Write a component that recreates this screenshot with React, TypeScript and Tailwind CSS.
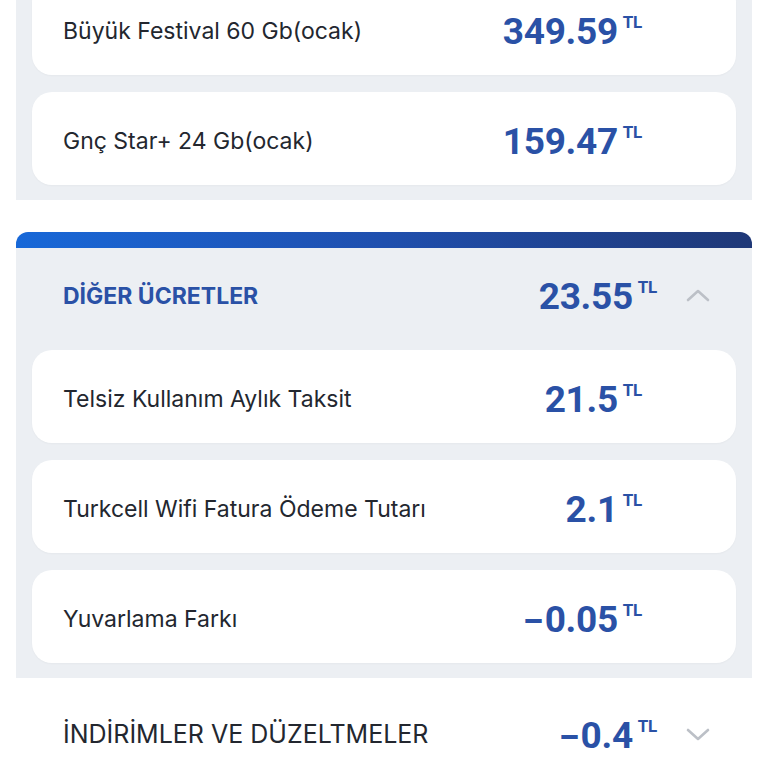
import React from "react";

const Amount = ({ value }: { value: string }) => {
  const neg = value.startsWith("-");
  const rest = neg ? value.slice(1) : value;
  return (
    <div className="flex items-start text-[#2a51a6]">
      <span className="font-['Roboto',sans-serif] font-bold text-[37px] leading-none tracking-[-0.3px]">
        {neg && <span className="inline-block scale-x-[1.6] mr-[8px] origin-left">-</span>}
        {rest}
      </span>
      <span className="ml-[5px] mt-[1px] font-['Roboto',sans-serif] font-bold text-[17px] leading-none tracking-[-0.3px]">TL</span>
    </div>
  );
};

const Card = ({ label, value }: { label: string; value: string }) => (
  <div className="h-[93px] rounded-[20px] bg-white flex items-center justify-between pl-[31px] pr-[94px] pt-[5px] shadow-[0_1px_2px_rgba(0,0,0,0.03)]">
    <span className="font-['Inter',sans-serif] text-[23px] text-[#23272f]">{label}</span>
    <Amount value={value} />
  </div>
);

const Chevron = ({ up }: { up?: boolean }) => (
  <svg width="24" height="14" viewBox="0 0 24 14" fill="none">
    <path
      d={up ? "M2 12 L12 3 L22 12" : "M2 2 L12 11 L22 2"}
      stroke="#bcc0c7"
      strokeWidth="2.6"
      strokeLinecap="round"
      strokeLinejoin="round"
    />
  </svg>
);

export default function App() {
  return (
    <div className="w-[768px] h-[768px] overflow-hidden bg-white">
      <div className="mx-4 bg-[#eceff3] px-4 pb-[15px] -mt-[18px] flex flex-col gap-[17px]">
        <Card label="Büyük Festival 60 Gb(ocak)" value="349.59" />
        <Card label="Gnç Star+ 24 Gb(ocak)" value="159.47" />
      </div>
      <div className="mt-[32px] mx-4 h-[16px] rounded-t-[12px] bg-gradient-to-r from-[#1768d8] via-[#1f4fae] to-[#1f3877]" />
      <div className="mx-4 bg-[#eceff3] px-4 pb-[15px]">
        <div className="h-[102px] flex items-center pl-[31px] pr-[26px] pb-[6px]">
          <span className="font-['Inter',sans-serif] font-bold text-[23px] text-[#2a51a6]">DİĞER ÜCRETLER</span>
          <div className="ml-auto flex items-center">
            <Amount value="23.55" />
            <div className="ml-[29px] mb-[2px]"><Chevron up /></div>
          </div>
        </div>
        <div className="flex flex-col gap-[17px]">
          <Card label="Telsiz Kullanım Aylık Taksit" value="21.5" />
          <Card label="Turkcell Wifi Fatura Ödeme Tutarı" value="2.1" />
          <Card label="Yuvarlama Farkı" value="-0.05" />
        </div>
      </div>
      <div className="h-[116px] flex items-center pl-[63px] pr-[58px] pb-[2px]">
        <span className="font-['Inter',sans-serif] text-[25px] text-[#23272f]">İNDİRİMLER VE DÜZELTMELER</span>
        <div className="ml-auto flex items-center">
          <Amount value="-0.4" />
          <div className="ml-[29px]"><Chevron /></div>
        </div>
      </div>
    </div>
  );
}
